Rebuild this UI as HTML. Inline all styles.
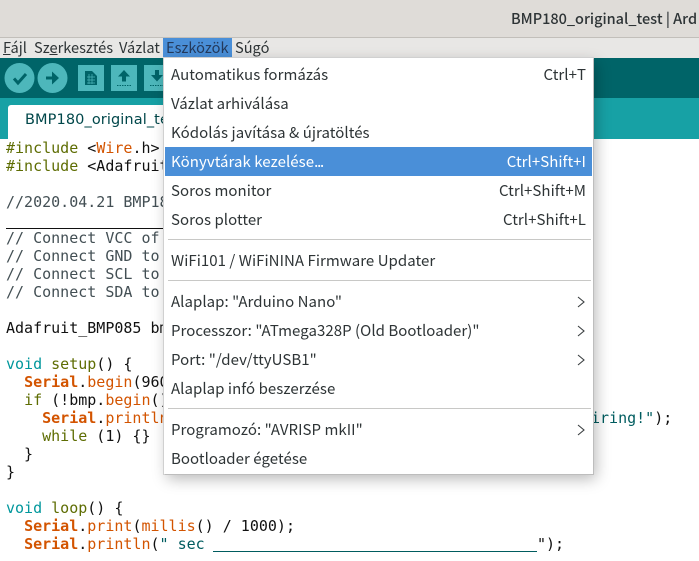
<!DOCTYPE html>
<html><head><meta charset="utf-8"><style>
html,body{margin:0;padding:0;background:#fff}
#p{position:relative;width:699px;height:561px;overflow:hidden;background:#fff;font-family:"Noto Sans CJK JP","DejaVu Sans",sans-serif;font-size:14.6px;color:#2e3436}
.a{position:absolute;white-space:pre}
.c{position:absolute;left:6px;white-space:pre;font:15px/18px "DejaVu Sans Mono",monospace;color:#111}
.k{color:#5e6d03}.o{color:#d35400}.t{color:#00979c}.g{color:#434f54}.s{color:#005c5f}
.b{font-weight:bold;color:#d35400}
.m{position:absolute;left:171px;white-space:pre;line-height:20px;color:#2e3436;font-size:15px;letter-spacing:.05px}
.r{position:absolute;right:113px;white-space:pre;line-height:20px;color:#2e3436;font-size:15px;letter-spacing:.05px}
.sep{position:absolute;left:168px;width:423px;height:1px;background:#c8c8c6}
</style></head><body><div id="p">
<div class="a" style="left:0;top:0;width:699px;height:37px;background:#dfdcd8;border-bottom:1px solid #c2bfba;box-sizing:content-box"></div>
<div class="a" style="left:511px;top:9px;font-weight:500;font-size:14.5px;line-height:20px;color:#2e3436">BMP180_original_test | Ard</div>
<div class="a" style="left:0;top:38px;width:699px;height:20px;background:#e8e7e5"></div>
<div class="a" style="left:3px;top:38px;line-height:20px"><u>F</u>ájl</div>
<div class="a" style="left:34px;top:38px;line-height:20px">Sz<u>e</u>rkesztés</div>
<div class="a" style="left:119px;top:38px;line-height:20px">Vázlat</div>
<div class="a" style="left:163px;top:38px;width:69px;height:20px;background:#4a8fd8"></div>
<div class="a" style="left:166px;top:38px;line-height:20px;color:#243a5c">Eszközök</div>
<div class="a" style="left:235px;top:38px;line-height:20px">Súgó</div>

<div class="a" style="left:0;top:58px;width:699px;height:40px;background:#006468"></div>
<div class="a" style="left:0;top:98px;width:699px;height:41px;background:#17a1a5"></div>
<svg class="a" style="left:0;top:58px" width="170" height="40" viewBox="0 0 170 40">
<circle cx="19.5" cy="20" r="15" fill="#4db7bb"/><circle cx="52.5" cy="20" r="15" fill="#4db7bb"/>
<path d="M14 20.5l4 4.500 8-9" fill="none" stroke="#006468" stroke-width="3"/>
<path d="M46 18.500h6v-5l7 6.500-7 6.500v-5h-6z" fill="#006468"/>
<rect x="78" y="7" width="26" height="26" fill="#4db7bb"/><rect x="111" y="7" width="26" height="26" fill="#4db7bb"/><rect x="144" y="7" width="26" height="26" fill="#4db7bb"/>
<path d="M85 13h7l5 5v9H85z" fill="#006468"/><path d="M87 19h8M87 22h8M87 25h8M89 16v10M92 16v10" stroke="#4db7bb" stroke-width=".7"/>
<path d="M124 12l6 6.500h-4v5h-4v-5h-4z" fill="#006468"/><path d="M117 27.500h14" stroke="#006468" stroke-dasharray="1.500 1"/>
<path d="M155 12h4v5h4l-6 6.500-6-6.500h4z" fill="#006468"/><path d="M150 27.500h14" stroke="#006468" stroke-dasharray="1.500 1"/>
</svg>
<div class="a" style="left:8px;top:105px;width:170px;height:34px;background:#fff;border-radius:3px 3px 0 0"></div>
<div class="a" style="left:25px;top:109px;line-height:22px;font-size:14.5px;color:#00474a;font-family:'DejaVu Sans',sans-serif;letter-spacing:.1px">BMP180_original_test</div>

<div class="c" style="top:139px"><span class="k">#include</span> &lt;<span class="o">Wire</span>.h&gt;</div>
<div class="c" style="top:157px"><span class="k">#include</span> &lt;Adafruit_BMP085.h&gt;</div>
<div class="c g" style="top:193px">//2020.04.21 BMP180</div>
<div class="a" style="left:6px;top:228px;width:160px;height:1px;background:#111"></div>
<div class="c g" style="top:229px">// Connect VCC of</div>
<div class="c g" style="top:247px">// Connect GND to</div>
<div class="c g" style="top:265px">// Connect SCL to</div>
<div class="c g" style="top:283px">// Connect SDA to</div>
<div class="c" style="top:319px">Adafruit_BMP085 bmp;</div>
<div class="c" style="top:355px"><span class="t">void</span> <span class="k">setup</span>() {</div>
<div class="c" style="top:373px">  <span class="b">Serial</span>.<span class="o">begin</span>(9600);</div>
<div class="c" style="top:391px">  <span class="k">if</span> (!bmp.<span class="o">begin</span>()) {</div>
<div class="c" style="top:409px">    <span class="b">Serial</span>.<span class="o">println</span>(</div>
<div class="c" style="top:427px">    <span class="k">while</span> (1) {}</div>
<div class="c" style="top:445px">  }</div>
<div class="c" style="top:463px">}</div>
<div class="c" style="top:499px"><span class="t">void</span> <span class="k">loop</span>() {</div>
<div class="c" style="top:517px">  <span class="b">Serial</span>.<span class="o">print</span>(<span class="o">millis</span>() / 1000);</div>
<div class="c" style="top:535px">  <span class="b">Serial</span>.<span class="o">println</span>(<span class="s">" sec </span></div>
<div class="a" style="left:213px;top:551px;width:324px;height:1px;background:#005c5f"></div>
<div class="c" style="top:535px;left:537px">");</div>
<div class="c" style="top:409px;left:591px"><span class="s">iring!"</span>);</div>

<div class="a" style="left:164px;top:58px;width:429px;height:416px;background:#fff;box-shadow:1px 1px 0 #bdbdbd,0 0 0 1px #d0d0d0,3px 5px 14px rgba(0,0,0,.28)"></div>
<div class="a" style="left:165px;top:147px;width:427px;height:29px;background:#4a8fd8"></div>
<div class="m" style="top:65px">Automatikus formázás</div><div class="r" style="top:65px">Ctrl+T</div>
<div class="m" style="top:94px">Vázlat arhiválása</div>
<div class="m" style="top:123px">Kódolás javítása &amp; újratöltés</div>
<div class="m" style="top:152px;color:#fff">Könyvtárak kezelése<span style="letter-spacing:-1.2px">...</span></div><div class="r" style="top:152px;color:#fff">Ctrl+Shift+I</div>
<div class="m" style="top:181px">Soros monitor</div><div class="r" style="top:181px">Ctrl+Shift+M</div>
<div class="m" style="top:210px">Soros plotter</div><div class="r" style="top:210px">Ctrl+Shift+L</div>
<div class="sep" style="top:239px"></div>
<div class="m" style="top:251px">WiFi101 / WiFiNINA Firmware Updater</div>
<div class="sep" style="top:280px"></div>
<div class="m" style="top:292px">Alaplap: "Arduino Nano"</div>
<div class="m" style="top:321px">Processzor: "ATmega328P (Old Bootloader)"</div>
<div class="m" style="top:350px">Port: "/dev/ttyUSB1"</div>
<div class="m" style="top:379px">Alaplap infó beszerzése</div>
<div class="sep" style="top:408px"></div>
<div class="m" style="top:420px">Programozó: "AVRISP mkII"</div>
<div class="m" style="top:449px">Bootloader égetése</div>
<svg class="a" style="left:570px;top:290px" width="20" height="150" fill="none" stroke="#3a3f41" stroke-width="1.100">
<path d="M8 7l6 5-6 5M8 36l6 5-6 5M8 65l6 5-6 5M8 135l6 5-6 5"/>
</svg>
</div></body></html>
